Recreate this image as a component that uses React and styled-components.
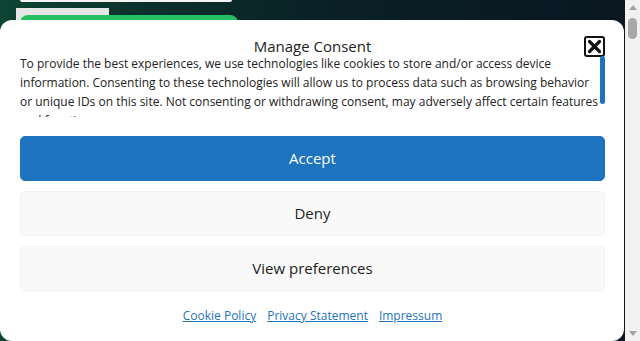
import styled, { createGlobalStyle } from 'styled-components';

const GlobalStyle = createGlobalStyle`
    body {
        margin: 0;
        font-family: "Open Sans", "Liberation Sans", sans-serif;
        background: #0a1a22;
        overflow: hidden;
    }
    * {
        box-sizing: border-box;
    }
`

const links = ['Cookie Policy', 'Privacy Statement', 'Impressum'];

const App = () => {
    return (
        <>
            <GlobalStyle />
            <Screen>
                <Page>
                    <Hero>
                        <TopStrip />
                        <Label />
                        <GreenButton />
                    </Hero>
                </Page>
                <Rail>
                    <Arrow />
                    <Thumb />
                    <Arrow down />
                </Rail>
            </Screen>
            <Modal>
                <Header>
                    <Title>Manage Consent</Title>
                    <Close aria-label="close">
                        <svg width="15" height="15" viewBox="0 0 15 15">
                            <path d="M2.5 2.5 L12.5 12.5 M12.5 2.5 L2.5 12.5" stroke="#111" strokeWidth="3.2" strokeLinecap="round" />
                        </svg>
                    </Close>
                </Header>
                <MessageBox>
                    <Message>
                        To provide the best experiences, we use technologies like cookies to store and/or access device information. Consenting to these technologies will allow us to process data such as browsing behavior or unique IDs on this site. Not consenting or withdrawing consent, may adversely affect certain features and functions.
                    </Message>
                    <MessageThumb />
                </MessageBox>
                <Buttons>
                    <Button primary>Accept</Button>
                    <Button>Deny</Button>
                    <Button>View preferences</Button>
                </Buttons>
                <Links>
                    {links.map((l) => (
                        <a key={l} href="#">{l}</a>
                    ))}
                </Links>
            </Modal>
        </>
    )
}

const Screen = styled.div`
    display: flex;
    height: 100vh;
`

const Page = styled.div`
    flex: 1;
    overflow: hidden;
    background: linear-gradient(90deg, #0c4533 0%, #0b2f2b 25%, #0a1f26 55%, #0a1722 100%);
`

const Rail = styled.div`
    width: 15px;
    background: #f1f1f1;
    display: flex;
    flex-direction: column;
    align-items: center;
    padding: 5px 0;
    position: relative;
    z-index: 20;
`

const Arrow = styled.div`
    width: 0;
    height: 0;
    border-left: 4px solid transparent;
    border-right: 4px solid transparent;
    ${(p) => (p.down
        ? 'border-top: 5px solid #a3a3a3; margin-top: auto;'
        : 'border-bottom: 5px solid #a3a3a3;')}
`

const Thumb = styled.div`
    width: 9px;
    height: 21px;
    margin-top: 8px;
    background: #a8a8a8;
    border-radius: 5px;
`

const Hero = styled.div`
    display: flex;
    flex-direction: column;
    align-items: flex-start;
    padding-left: 20px;
    height: 60px;
`

const TopStrip = styled.div`
    width: 212px;
    height: 2px;
    background: #f4f4f4;
    border-radius: 0 0 3px 3px;
`

const Label = styled.div`
    width: 93px;
    height: 12px;
    margin: 6px 0 0 -4px;
    background: #e6e6e6;
`

const GreenButton = styled.div`
    width: 218px;
    height: 30px;
    margin-top: -5px;
    background: #24c063;
    border-radius: 8px;
`

const Modal = styled.div`
    position: fixed;
    top: 20px;
    left: 0;
    right: 16px;
    bottom: 0;
    z-index: 10;
    background: #fff;
    border-radius: 12px;
    padding: 15px 19px 0 20px;
    display: flex;
    flex-direction: column;
    color: #222;
`

const Header = styled.div`
    display: grid;
    grid-template-columns: 21px 1fr 21px;
    align-items: center;
    height: 21px;
`

const Title = styled.div`
    grid-column: 2;
    text-align: center;
    font-size: 15px;
    line-height: 21px;
    padding-top: 1px;
    color: #222;
`

const Close = styled.button`
    grid-column: 3;
    width: 21px;
    height: 21px;
    padding: 0;
    display: flex;
    align-items: center;
    justify-content: center;
    background: #fff;
    border: 2px solid #111;
    border-radius: 3px;
    cursor: pointer;
`

const MessageBox = styled.div`
    display: flex;
    height: 63px;
    margin-top: -2px;
`

const Message = styled.div`
    flex: 1;
    overflow: hidden;
    font-size: 12px;
    line-height: 19px;
    color: #222;
`

const MessageThumb = styled.div`
    width: 5px;
    height: 48px;
    margin-top: 2px;
    background: #1e73be;
    border-radius: 3px;
`

const Buttons = styled.div`
    display: flex;
    flex-direction: column;
    gap: 10px;
    margin-top: 19px;
`

const Button = styled.button`
    height: 45px;
    width: 100%;
    padding: 0 0 2px;
    border-radius: 5px;
    font-family: "Open Sans", "Liberation Sans", sans-serif;
    font-size: 15px;
    cursor: pointer;
    background: ${(p) => (p.primary ? '#1e73be' : '#f9f9f9')};
    color: ${(p) => (p.primary ? '#fff' : '#222')};
    border: 1px solid ${(p) => (p.primary ? '#1e73be' : '#f2f2f2')};
`

const Links = styled.div`
    display: flex;
    justify-content: center;
    gap: 11px;
    margin-top: 16px;
    font-size: 12px;
    line-height: 17px;
    a {
        color: #1e73be;
        text-decoration: underline;
    }
`

export default App;
